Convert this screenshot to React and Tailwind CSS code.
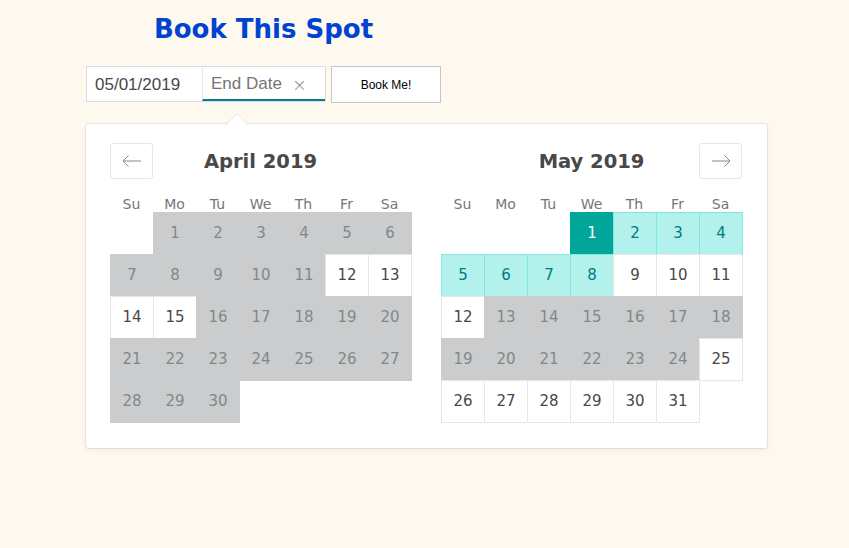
import React from "react";

const april = { title: "April 2019", offset: 1, days: 30, status: (d) => ([12, 13, 14, 15].includes(d) ? "open" : "blocked") };
const may = {
  title: "May 2019",
  offset: 3,
  days: 31,
  status: (d) => {
    if (d === 1) return "selected";
    if (d >= 2 && d <= 8) return "span";
    if (d >= 13 && d <= 24) return "blocked";
    return "open";
  },
};

const cellStyles = {
  open: "bg-white border-[#e4e7e7] text-[#484848]",
  blocked: "bg-[#cacccd] border-[#cacccd] text-[#82888a]",
  selected: "bg-[#00a699] border-[#00a699] text-white",
  span: "bg-[#b2f1ec] border-[#80e8e0] text-[#007a87]",
};

function Arrow({ dir }) {
  return (
    <svg width="20" height="12" viewBox="0 0 20 12" fill="none" stroke="#82888a" strokeWidth="1" className={dir === "left" ? "" : "rotate-180"}>
      <path d="M1 6 H19" />
      <path d="M6.5 0.5 L1 6 L6.5 11.5" />
    </svg>
  );
}

function Month({ m, nav }) {
  const cells = [];
  for (let i = 0; i < m.offset; i++) cells.push(null);
  for (let d = 1; d <= m.days; d++) cells.push(d);
  return (
    <div className="w-[301px]">
      <div className="grid grid-cols-[43px_1fr_43px] h-[36px] items-center">
        <div>
          {nav === "left" && (
            <div className="w-[43px] h-[36px] border border-[#e4e7e7] rounded-[3px] bg-white flex items-center justify-center">
              <Arrow dir="left" />
            </div>
          )}
        </div>
        <div className="text-center text-[19.5px] font-bold text-[#484848] leading-none pt-[1px]">{m.title}</div>
        <div>
          {nav === "right" && (
            <div className="w-[43px] h-[36px] border border-[#e4e7e7] rounded-[3px] bg-white flex items-center justify-center">
              <Arrow dir="right" />
            </div>
          )}
        </div>
      </div>
      <div className="grid grid-cols-[repeat(7,43px)] h-[33px] items-end pb-0">
        {["Su", "Mo", "Tu", "We", "Th", "Fr", "Sa"].map((w) => (
          <div key={w} className="text-center text-[14px] leading-4 text-[#757575]">{w}</div>
        ))}
      </div>
      <div className="grid grid-cols-[repeat(7,43px)] auto-rows-[42px]">
        {cells.map((d, i) =>
          d === null ? (
            <div key={i} />
          ) : (
            <div
              key={i}
              className={`w-[44px] h-[43px] border flex items-center justify-center text-[15px] ${cellStyles[m.status(d)]}`}
            >
              {d}
            </div>
          )
        )}
      </div>
    </div>
  );
}

export default function App() {
  return (
    <div className="min-h-screen w-full bg-[#fdf9ee] font-['DejaVu_Sans',sans-serif]">
      <div className="pl-[86px] pt-[13px]">
        <div className="w-[355px]">
          <h1 className="text-center text-[26px] leading-[32px] font-bold text-[#0042d1]">Book This Spot</h1>
        </div>
        <div className="flex items-start gap-[5px] mt-[21px]">
          <div className="flex w-[240px] h-[36px] border border-[#dbdbdb] bg-white font-['Liberation_Sans',sans-serif] text-[17px]">
            <div className="w-[115px] flex items-center pl-[8px] pt-[2px] text-[#484848]">05/01/2019</div>
            <div className="flex-1 relative flex items-center pl-[8px] pt-[2px] text-[#757575] border-l border-l-[#e6e6e6] border-b-2 border-b-[#008489]">
              <span>End Date</span>
              <span className="absolute right-[18px] top-[8px] text-[18px] text-[#888] leading-5 font-['DejaVu_Sans',sans-serif] font-light">×</span>
            </div>
          </div>
          <button className="w-[110px] h-[37px] bg-white border border-[#c6c6c6] text-[12px] text-black font-['Liberation_Sans',sans-serif]">
            Book Me!
          </button>
        </div>
        <div className="relative mt-[21px] w-[681px] h-[324px] bg-white rounded-[3px] shadow-[0_2px_6px_rgba(0,0,0,0.05),0_0_0_1px_rgba(0,0,0,0.07)] pl-[24px] pt-[19px]">
          <svg className="absolute left-[139px] -top-[11px]" width="24" height="12" viewBox="0 0 24 12">
            <path d="M0 12 L12 0.5 L24 12 Z" fill="white" />
            <path d="M0.5 12 L12 0.5 L23.5 12" fill="none" stroke="#e2e2e2" strokeWidth="1" />
          </svg>
          <div className="flex gap-[30px]">
            <Month m={april} nav="left" />
            <Month m={may} nav="right" />
          </div>
        </div>
      </div>
    </div>
  );
}
